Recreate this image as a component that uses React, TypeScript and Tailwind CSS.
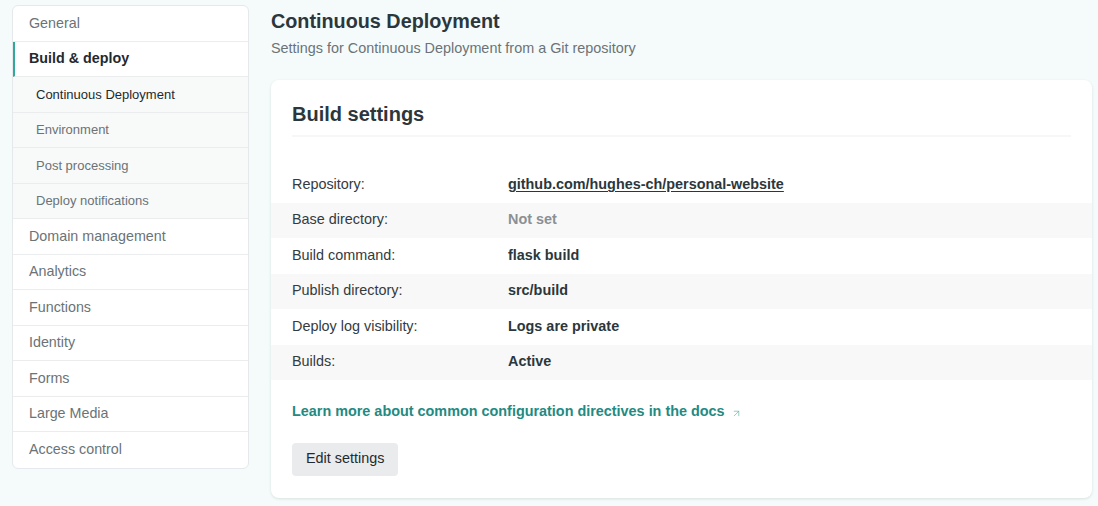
import { ArrowUpRight } from 'lucide-react';

const navTop = ['General'];
const subNav = ['Continuous Deployment', 'Environment', 'Post processing', 'Deploy notifications'];
const navRest = ['Domain management', 'Analytics', 'Functions', 'Identity', 'Forms', 'Large Media', 'Access control'];

const rows: { label: string; value: string; kind?: 'link' | 'muted' }[] = [
  { label: 'Repository:', value: 'github.com/hughes-ch/personal-website', kind: 'link' },
  { label: 'Base directory:', value: 'Not set', kind: 'muted' },
  { label: 'Build command:', value: 'flask build' },
  { label: 'Publish directory:', value: 'src/build' },
  { label: 'Deploy log visibility:', value: 'Logs are private' },
  { label: 'Builds:', value: 'Active' },
];

const Sidebar = () => (
  <nav className="w-[237px] shrink-0 mt-[5px] self-start bg-white border border-[#e6e9eb] rounded-[6px] overflow-hidden">
    {navTop.map((item) => (
      <div key={item} className="h-[35.5px] flex items-center pl-4 pt-px text-[14.3px] text-[#6b7377] border-b border-[#eaeced]">
        {item}
      </div>
    ))}
    <div className="h-[35.5px] flex items-center pl-[14px] text-[14.3px] font-bold text-[#1f2a2f] border-b border-[#eaeced] border-l-2 border-l-[#2fa99c]">
      Build &amp; deploy
    </div>
    {subNav.map((item, i) => (
      <div
        key={item}
        className={`h-[35.5px] flex items-center pl-[23px] text-[13px] bg-[#f8f9f9] border-b border-[#eaeced] ${
          i === 0 ? 'text-[#1f2a2f]' : 'text-[#6b7377]'
        }`}
      >
        {item}
      </div>
    ))}
    {navRest.map((item, i) => (
      <div
        key={item}
        className={`h-[35.5px] flex items-center pl-4 text-[14.3px] text-[#6b7377] ${
          i < navRest.length - 1 ? 'border-b border-[#eaeced]' : ''
        }`}
      >
        {item}
      </div>
    ))}
  </nav>
);

export default function App() {
  return (
    <div
      className="min-h-screen w-full bg-[#f5fbfb] flex gap-[22px] pl-3 pr-[6px] pb-2"
      style={{ fontFamily: '"Liberation Sans", Arial, sans-serif' }}
    >
      <Sidebar />
      <main className="flex-1 min-w-0">
        <h1 className="mt-[9px] text-[19.8px] leading-6 font-bold text-[#2b373c]">Continuous Deployment</h1>
        <p className="mt-[5px] text-[14.4px] leading-5 text-[#6b7377]">
          Settings for Continuous Deployment from a Git repository
        </p>

        <section className="mt-[22px] bg-white rounded-[8px] shadow-[0_1px_3px_rgba(14,30,37,0.12)] pt-[22px] pb-[22px]">
          <div className="mx-[21px] pb-[9px] border-b-2 border-[#f6f7f7]">
            <h2 className="text-[20px] leading-6 font-bold text-[#2b373c]">Build settings</h2>
          </div>

          <div className="mt-[30px]">
            {rows.map((r, i) => (
              <div
                key={r.label}
                className={`h-[35.5px] flex items-center px-[21px] text-[14.4px] ${i % 2 === 1 ? 'bg-[#f8f8f8]' : ''}`}
              >
                <div className="w-[216px] shrink-0 text-[#333b3f]">{r.label}</div>
                <div
                  className={`font-bold ${
                    r.kind === 'link'
                      ? 'text-[#2b373c] underline underline-offset-2 decoration-[#2b373c]'
                      : r.kind === 'muted'
                      ? 'text-[#8a9094]'
                      : 'text-[#2b373c]'
                  }`}
                >
                  {r.value}
                </div>
              </div>
            ))}
          </div>

          <div className="mt-[21px] px-[21px] flex items-center gap-[6px]">
            <span className="text-[14.4px] font-bold text-[#238a82]">
              Learn more about common configuration directives in the docs
            </span>
            <ArrowUpRight className="w-[11px] h-[11px] mt-[3px] text-[#5fb8a9]" strokeWidth={1.5} />
          </div>

          <div className="mt-[20px] px-[21px]">
            <button className="h-[33px] px-[14px] rounded-[4px] bg-[#e9ebed] text-[14.4px] text-[#1f2a2f]">
              Edit settings
            </button>
          </div>
        </section>
      </main>
    </div>
  );
}
